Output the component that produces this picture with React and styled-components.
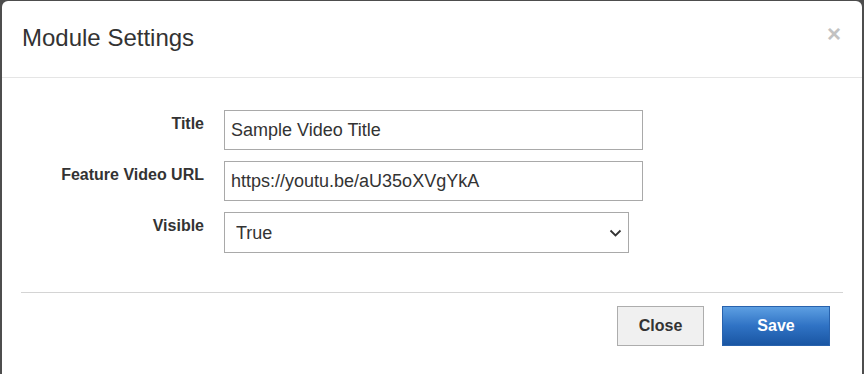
import styled, { createGlobalStyle } from "styled-components";

const Global = createGlobalStyle`
  html, body {
    margin: 0;
    padding: 0;
    height: 100%;
    background: #4d4d4d;
    overflow: hidden;
  }
  body {
    font-family: "Liberation Sans", Arial, sans-serif;
    color: #333;
  }
`;

const fields = [
  { label: "Title", value: "Sample Video Title" },
  { label: "Feature Video URL", value: "https://youtu.be/aU35oXVgYkA" },
];

export default function App() {
  return (
    <>
      <Global />
      <Modal>
        <Header>
          <Heading>Module Settings</Heading>
          <CloseX aria-label="Close">×</CloseX>
        </Header>
        <Body>
          <Form>
            {fields.map((f) => (
              <Row key={f.label}>
                <Label>{f.label}</Label>
                <Input defaultValue={f.value} />
              </Row>
            ))}
            <Row>
              <Label>Visible</Label>
              <SelectWrap>
                <Select defaultValue="true">
                  <option value="true">True</option>
                  <option value="false">False</option>
                </Select>
                <Chevron width="13" height="8" viewBox="0 0 13 8">
                  <path d="M1.5 1.5 L6.5 6.5 L11.5 1.5" fill="none" stroke="#333" strokeWidth="1.8" />
                </Chevron>
              </SelectWrap>
            </Row>
          </Form>
        </Body>
        <Footer>
          <Button>Close</Button>
          <Button primary>Save</Button>
        </Footer>
      </Modal>
    </>
  );
}

const Modal = styled.div`
  margin: 1px 2px 0 2px;
  height: calc(100vh - 1px);
  background: #fff;
  border-radius: 6px 6px 0 0;
  display: flex;
  flex-direction: column;
`;

const Header = styled.div`
  height: 76px;
  padding: 0 20px;
  border-bottom: 1px solid #e5e5e5;
  display: flex;
  align-items: center;
  justify-content: space-between;
`;

const Heading = styled.h4`
  margin: 0;
  font-size: 24px;
  font-weight: normal;
  line-height: 1.1;
  color: #333;
  padding-bottom: 2px;
`;

const CloseX = styled.span`
  font-size: 24px;
  font-weight: bold;
  line-height: 1;
  color: #c2c2c2;
  margin-right: 1px;
  margin-bottom: 10px;
`;

const Body = styled.div`
  padding: 32px 20px 39px;
`;

const Form = styled.div`
  display: flex;
  flex-direction: column;
  gap: 11px;
`;

const Row = styled.div`
  display: grid;
  grid-template-columns: 182px 1fr;
  column-gap: 20px;
  align-items: start;
`;

const Label = styled.label`
  text-align: right;
  font-size: 16px;
  font-weight: bold;
  line-height: 18px;
  padding-top: 5px;
  color: #333;
`;

const Input = styled.input`
  box-sizing: border-box;
  width: 419px;
  height: 40px;
  border: 1px solid #a9a9a9;
  padding: 0 6px;
  font-family: "Liberation Sans", Arial, sans-serif;
  font-size: 18px;
  color: #333;
  outline: none;
`;

const SelectWrap = styled.div`
  position: relative;
  width: 405px;
`;

const Select = styled.select`
  box-sizing: border-box;
  width: 405px;
  height: 41px;
  border: 1px solid #a9a9a9;
  border-radius: 0;
  background: #fff;
  padding: 0 30px 0 11px;
  font-family: "Liberation Sans", Arial, sans-serif;
  font-size: 18px;
  color: #333;
  appearance: none;
  outline: none;
`;

const Chevron = styled.svg`
  position: absolute;
  right: 7px;
  top: 17px;
  pointer-events: none;
`;

const Footer = styled.div`
  margin: 0 19px;
  border-top: 1px solid #d4d4d4;
  padding: 13px 13px 0 0;
  display: flex;
  justify-content: flex-end;
  gap: 18px;
`;

const Button = styled.button`
  box-sizing: border-box;
  height: 40px;
  width: ${(p) => (p.primary ? "108px" : "87px")};
  font-family: "Liberation Sans", Arial, sans-serif;
  font-size: 16px;
  font-weight: bold;
  color: ${(p) => (p.primary ? "#fff" : "#333")};
  border: 1px solid ${(p) => (p.primary ? "#2862ad" : "#adadad")};
  background: ${(p) =>
    p.primary ? "linear-gradient(to bottom, #5d9fe2 0%, #2f72c4 50%, #1a56a3 100%)" : "#f0f0f0"};
  cursor: pointer;
`;
